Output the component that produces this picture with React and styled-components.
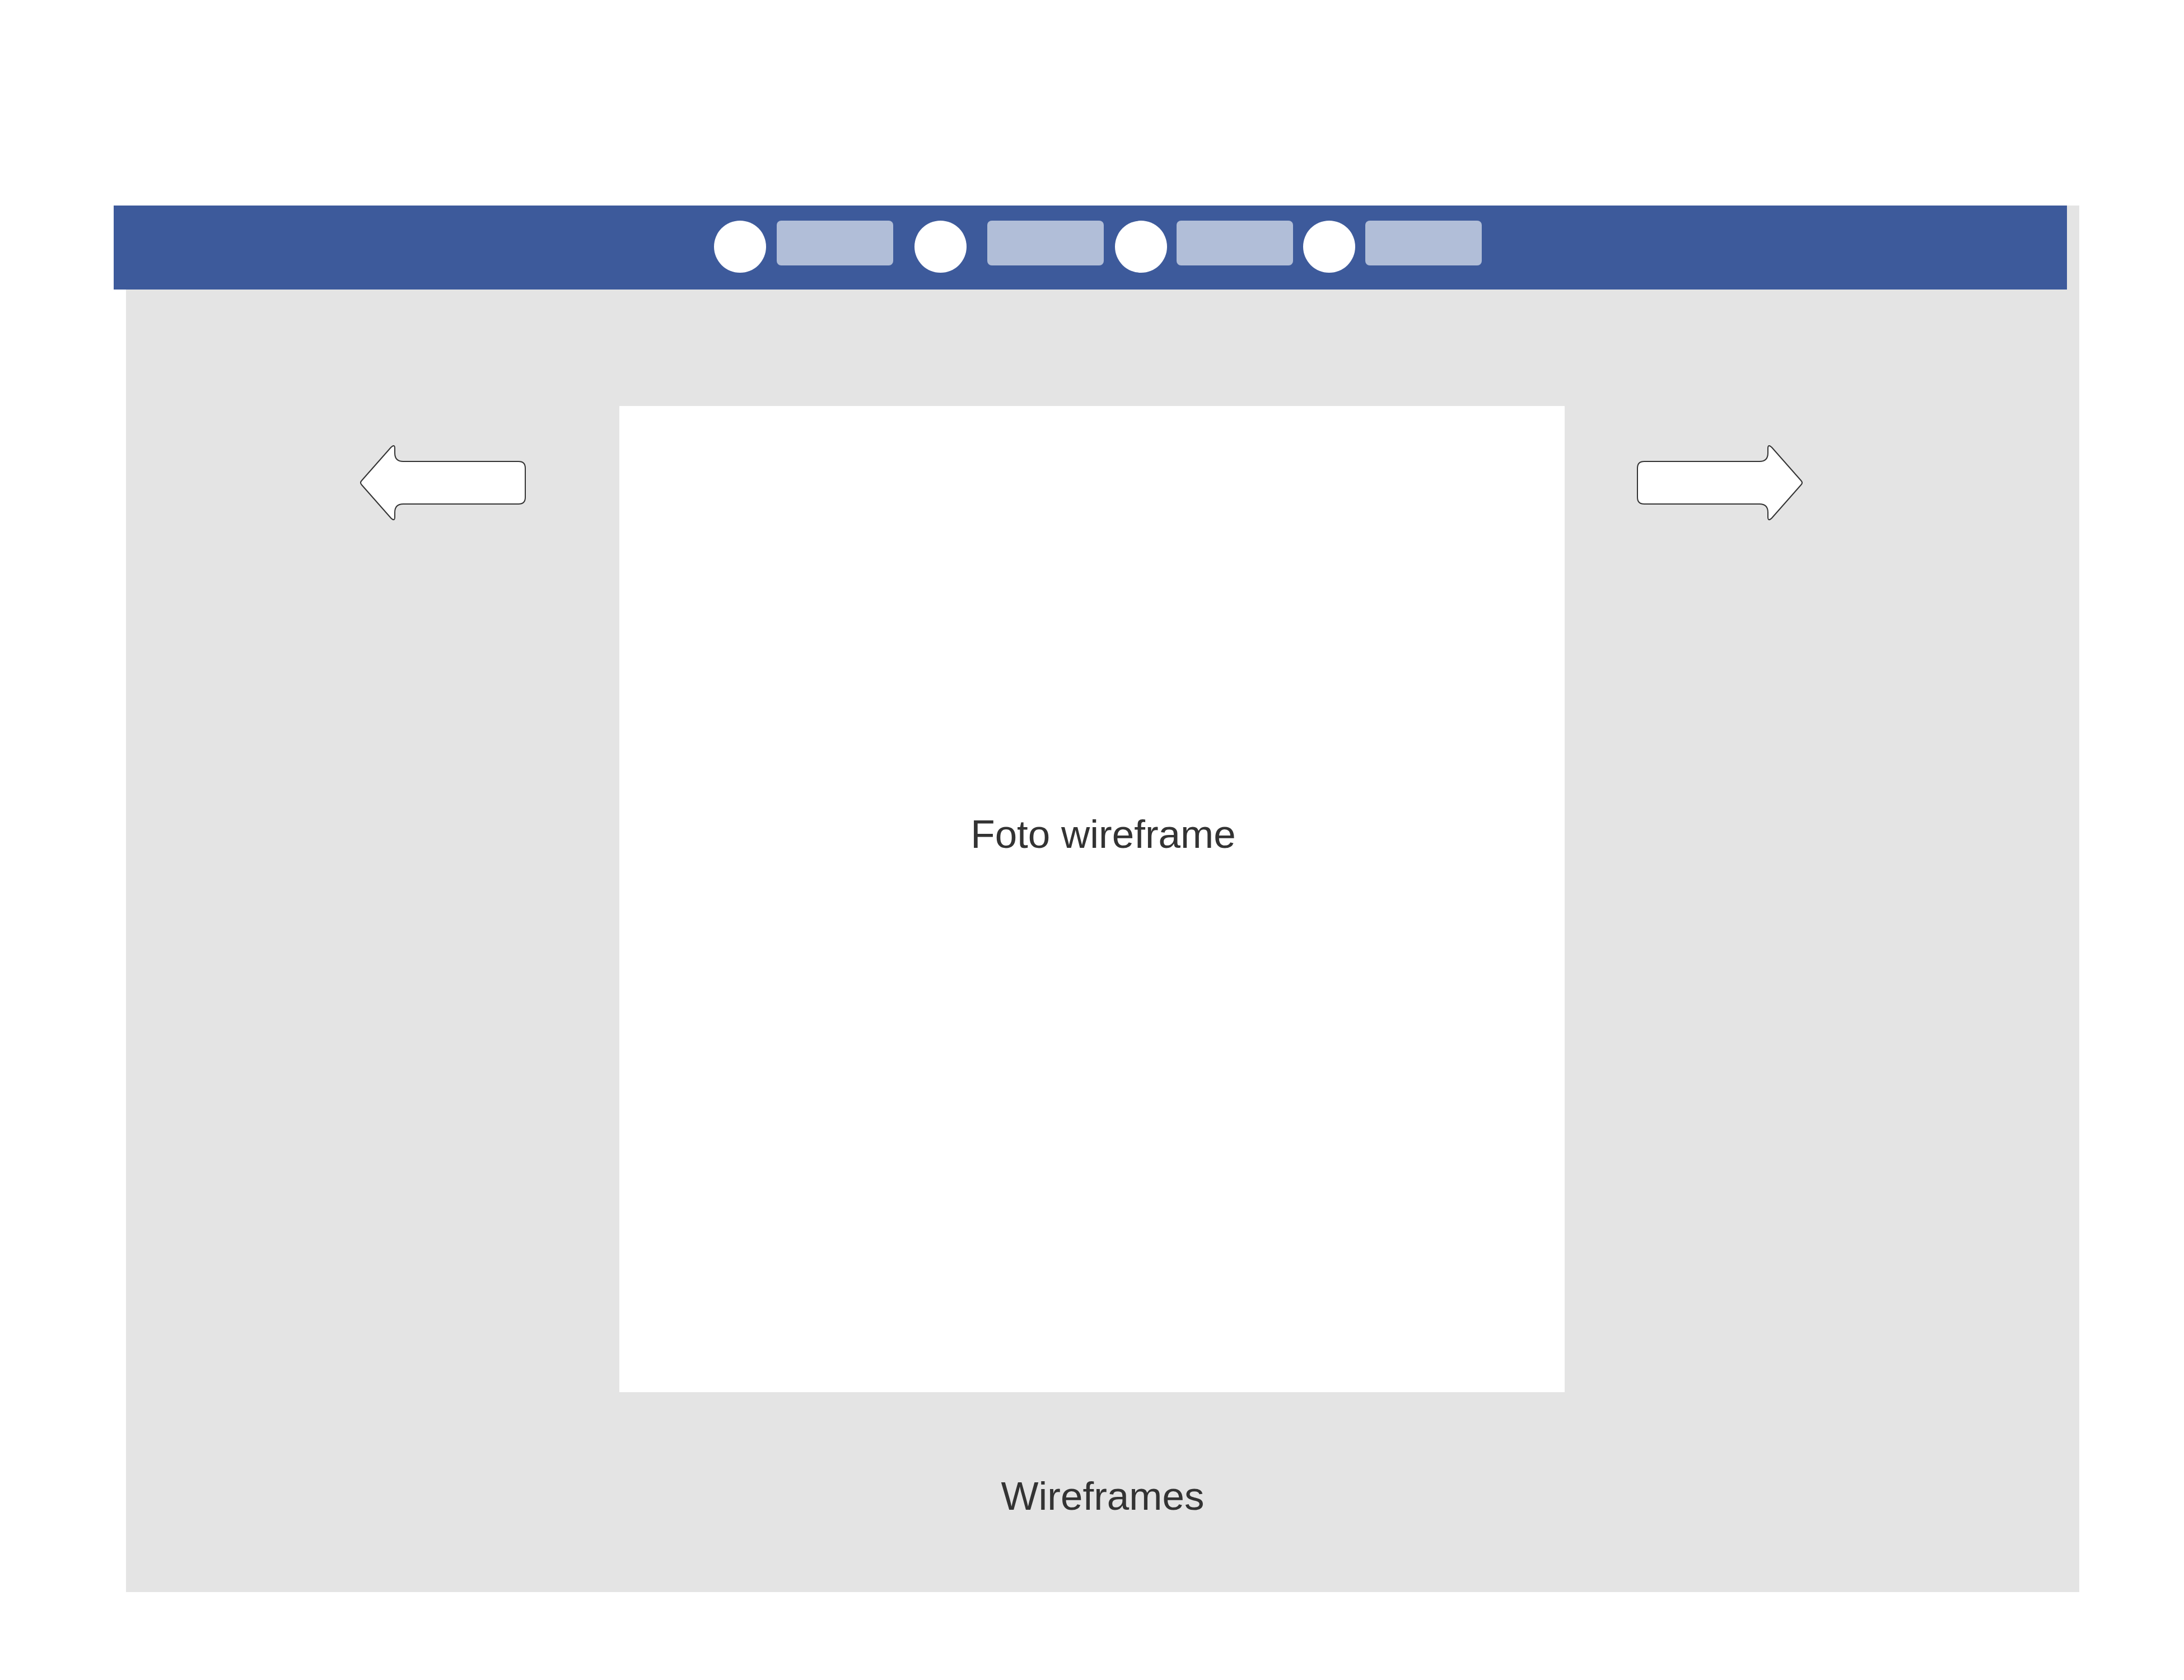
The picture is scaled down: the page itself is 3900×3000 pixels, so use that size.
import React from "react";
import styled, { createGlobalStyle } from "styled-components";

const GlobalStyle = createGlobalStyle`
  html, body { margin: 0; padding: 0; background: #ffffff; }
  body { font-family: "Liberation Sans", Arial, sans-serif; color: #333333; }
`;

const Page = styled.div`
  padding: 367px 0 157px 225px;
`;

const Panel = styled.section`
  width: 3488px;
  height: 2476px;
  background: #e4e4e4;
  display: flex;
  flex-direction: column;
`;

const TopBar = styled.header`
  margin-left: -22px;
  width: 3488px;
  height: 150px;
  box-sizing: border-box;
  background: #3d5a9b;
  display: flex;
  align-items: flex-start;
  padding: 27px 0 0 1072px;
`;

const NavGroup = styled.div`
  display: flex;
  align-items: flex-start;
  gap: ${(p) => p.$inner}px;
  margin-left: ${(p) => p.$offset}px;
`;

const NavDot = styled.span`
  width: 93px;
  height: 93px;
  border-radius: 50%;
  background: #ffffff;
  flex: none;
`;

const NavTab = styled.span`
  width: 208px;
  height: 80px;
  border-radius: 8px;
  background: #b1bed8;
  flex: none;
`;

const Stage = styled.div`
  display: flex;
  align-items: flex-start;
  padding: 208px 0 0 417px;
`;

const ArrowButton = styled.button`
  all: unset;
  display: block;
  width: 300px;
  height: 140px;
  margin-top: 67px;
  margin-left: ${(p) => p.$before}px;
  margin-right: ${(p) => p.$after}px;
  transform: ${(p) => (p.$flip ? "scaleX(-1)" : "none")};
  svg { display: block; }
`;

const Photo = styled.div`
  width: 1688px;
  height: 1761px;
  background: #ffffff;
  box-sizing: border-box;
  padding: 729px 0 0 40px;
  text-align: center;
`;

const PhotoLabel = styled.p`
  margin: 0;
  font-size: 71px;
  line-height: 71px;
  color: #333333;
`;

const Caption = styled.p`
  margin: 150px 0 0 0;
  text-align: center;
  font-size: 71px;
  line-height: 71px;
  color: #333333;
`;

const ArrowShape = () => (
  <svg width="300" height="140" viewBox="0 0 300 140">
    <path
      d="M 80 32 L 286 32 Q 298 32 298 44 L 298 96 Q 298 108 286 108 L 80 108 Q 65 108 65 123 L 65 131 Q 65 140 58 133 L 6 74 Q 2 70 6 66 L 58 7 Q 65 0 65 9 L 65 17 Q 65 32 80 32 Z"
      fill="#ffffff"
      stroke="#333333"
      strokeWidth="2"
      strokeLinejoin="round"
    />
  </svg>
);

const navGroups = [
  { offset: 0, inner: 19 },
  { offset: 38, inner: 37 },
  { offset: 20, inner: 17 },
  { offset: 18, inner: 18 },
];

export default function App() {
  return (
    <>
      <GlobalStyle />
      <Page>
        <Panel>
          <TopBar>
            {navGroups.map((g, i) => (
              <NavGroup key={i} $offset={g.offset} $inner={g.inner}>
                <NavDot />
                <NavTab />
              </NavGroup>
            ))}
          </TopBar>
          <Stage>
            <ArrowButton $before={-2} $after={166} aria-label="Previous">
              <ArrowShape />
            </ArrowButton>
            <Photo>
              <PhotoLabel>Foto wireframe</PhotoLabel>
            </Photo>
            <ArrowButton $before={128} $after={0} $flip aria-label="Next">
              <ArrowShape />
            </ArrowButton>
          </Stage>
          <Caption>Wireframes</Caption>
        </Panel>
      </Page>
    </>
  );
}
